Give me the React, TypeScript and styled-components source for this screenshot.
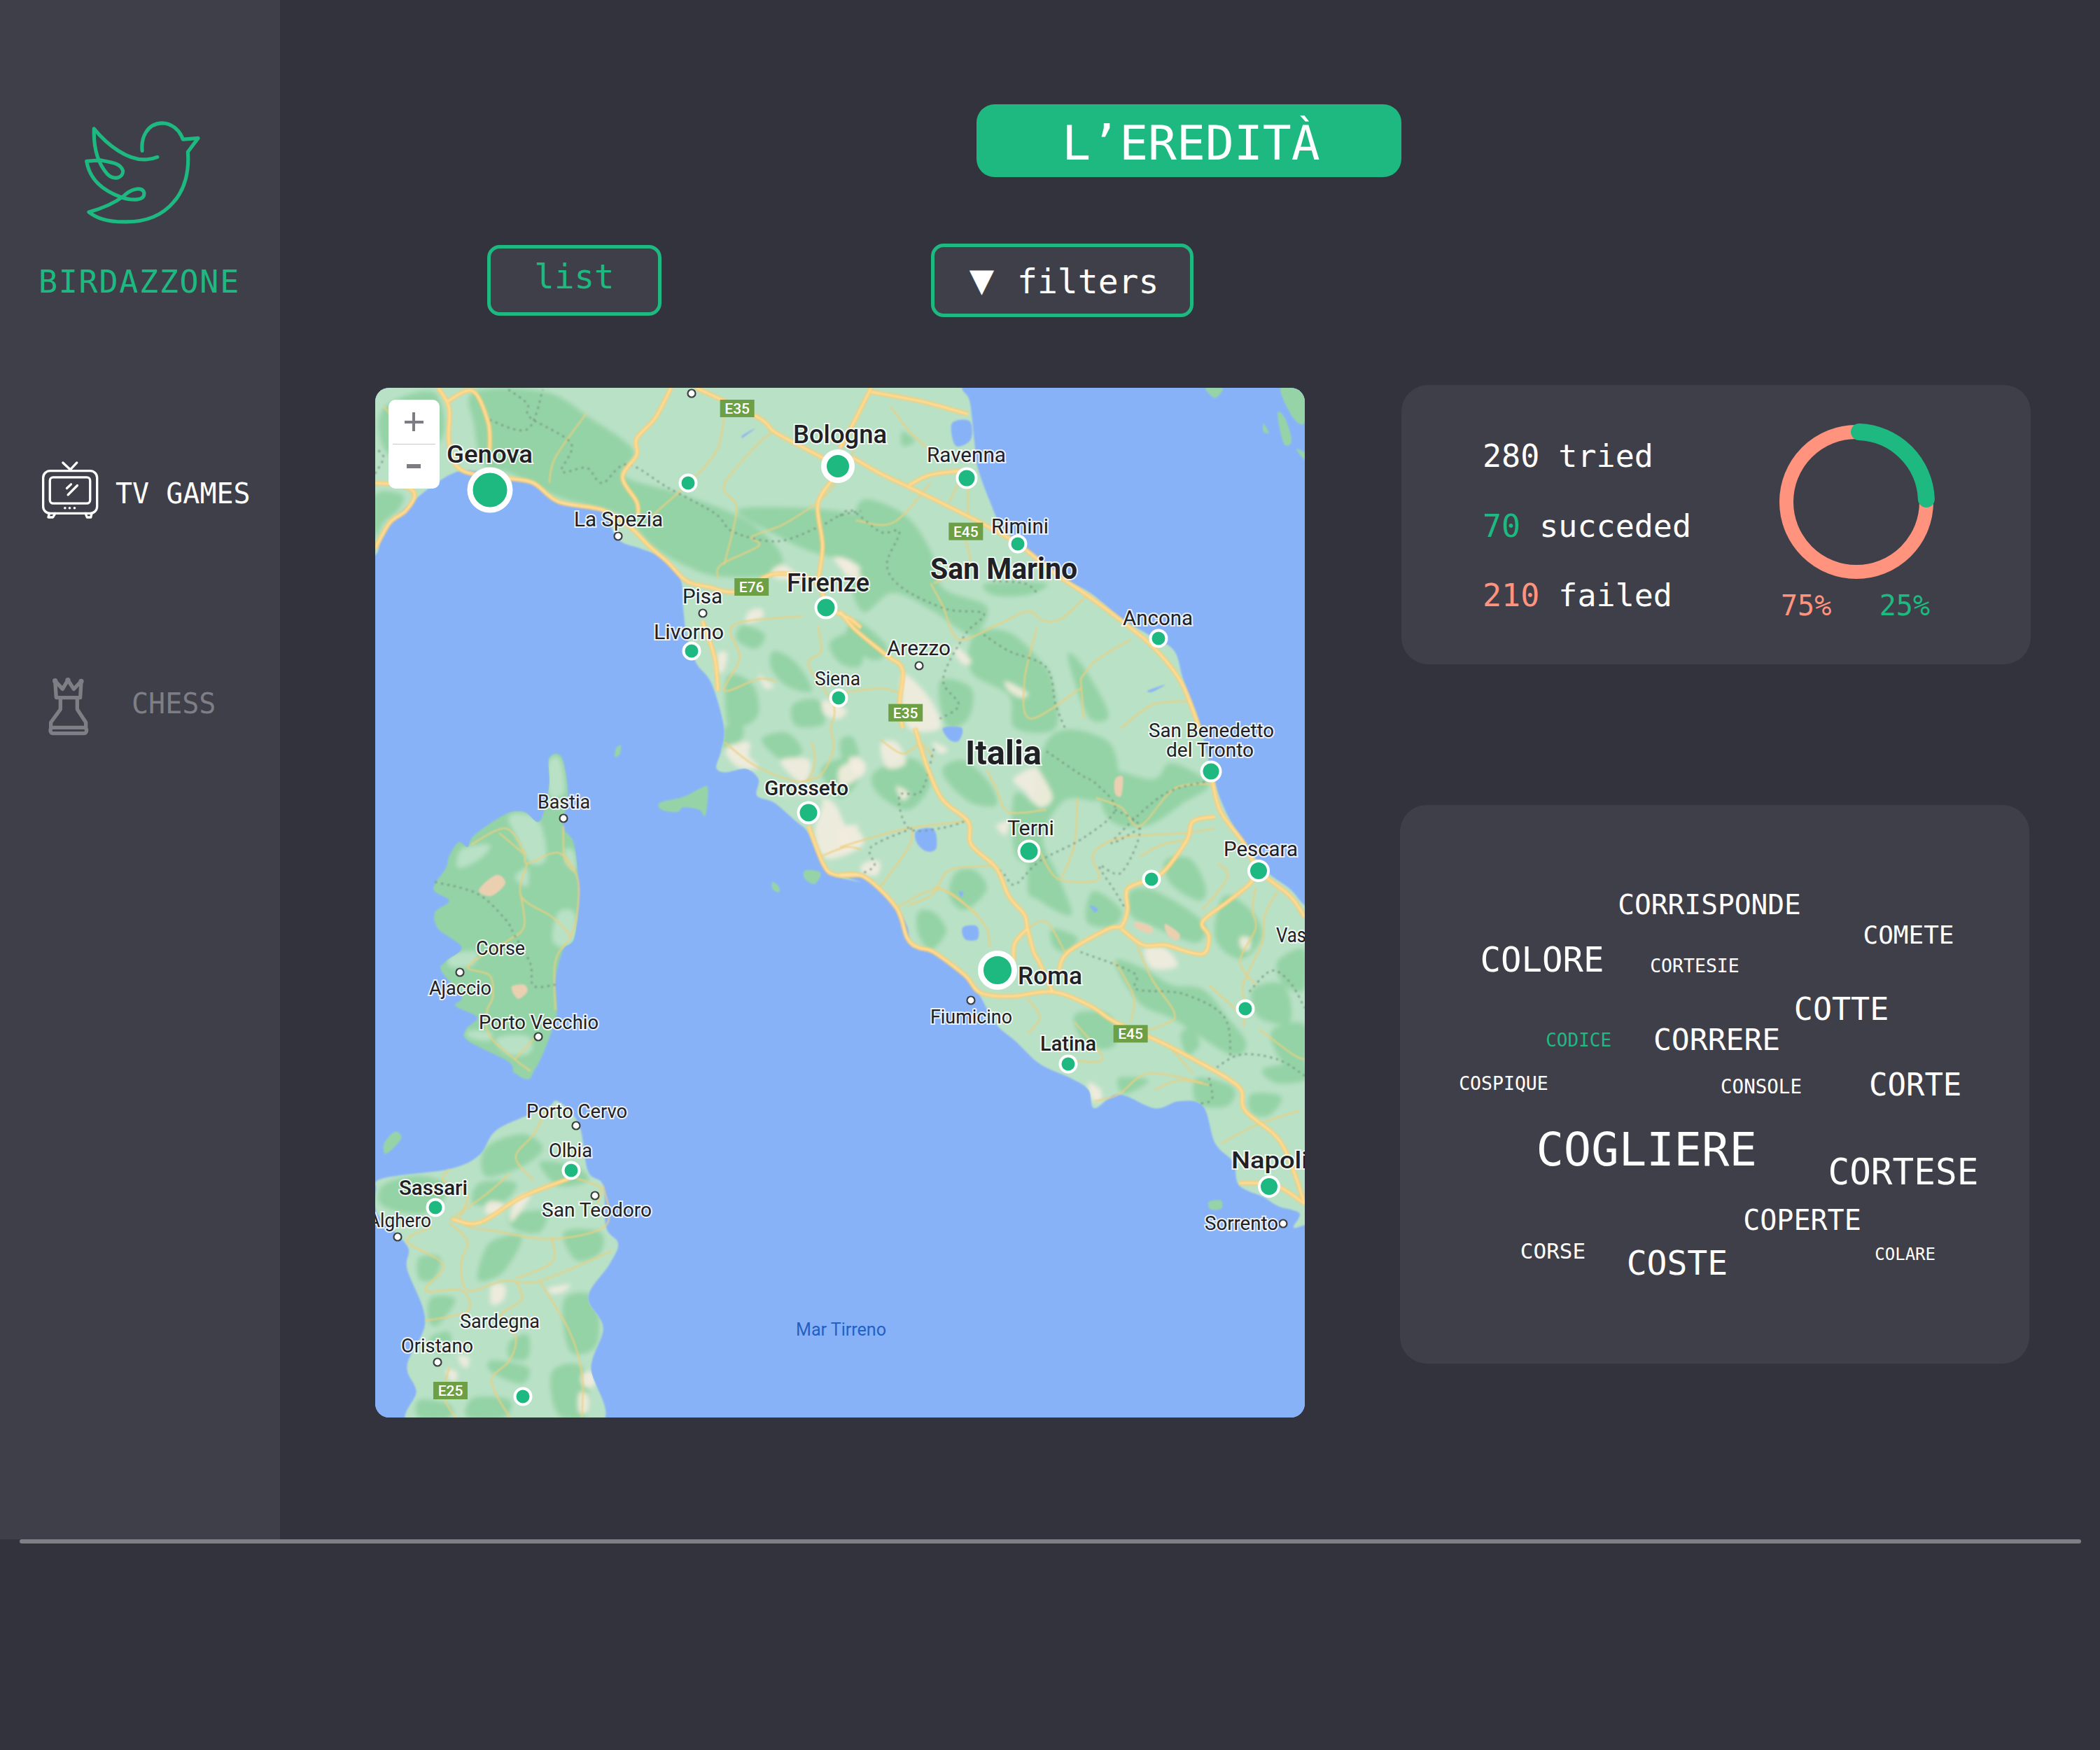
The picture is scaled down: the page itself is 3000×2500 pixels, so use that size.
import React from "react";
import styled, { createGlobalStyle } from "styled-components";

const GREEN = "#1eb980";
const CORAL = "#ff937e";
const BG = "#33333d";
const SURFACE = "#3f3f49";
const MONO = `"DejaVu Sans Mono", "Liberation Mono", monospace`;

const GlobalStyle = createGlobalStyle`
  html, body {
    margin: 0;
    padding: 0;
    background: ${BG};
  }
  body {
    font-family: ${MONO};
    color: #fff;
  }
`;

const Page = styled.div`
  width: 3000px;
  height: 2500px;
  background: ${BG};
`;

const Shell = styled.div`
  display: flex;
  height: 2199px;
`;

const Scrollbar = styled.div`
  width: 2945px;
  height: 6px;
  margin-left: 28px;
  border-radius: 3px;
  background: #7f7f85;
`;

const Sidebar = styled.aside`
  width: 400px;
  flex-shrink: 0;
  box-sizing: border-box;
  padding: 172px 0 0 57px;
  background: ${SURFACE};
`;

const BirdMark = styled.svg`
  display: block;
  width: 168px;
  height: 150px;
  margin-left: 63px;
`;

const Wordmark = styled.div`
  margin: 58px 0 0 -2px;
  font-size: 45px;
  line-height: 1;
  letter-spacing: 1.7px;
  color: ${GREEN};
`;

const NavItem = styled.div<{ $top: number; $gap: number; $indent?: number; $muted?: boolean }>`
  display: flex;
  align-items: center;
  gap: ${(p) => p.$gap}px;
  margin-top: ${(p) => p.$top}px;
  margin-left: ${(p) => p.$indent || 0}px;
  color: ${(p) => (p.$muted ? "#7e7e85" : "#fff")};
`;

const NavLabel = styled.span<{ $drop: number }>`
  font-size: 40px;
  line-height: 1;
  position: relative;
  top: ${(p) => p.$drop}px;
`;

const Main = styled.main`
  flex: 1;
  min-width: 0;
  padding-top: 149px;
`;

const Title = styled.h1`
  box-sizing: border-box;
  width: 607px;
  height: 104px;
  margin: 0 0 0 995px;
  padding: 6px 0 0 6px;
  display: flex;
  align-items: center;
  justify-content: center;
  border-radius: 26px;
  background: ${GREEN};
  font-size: 68px;
  font-weight: 400;
  color: #fff;
`;

const Controls = styled.div`
  display: flex;
  align-items: center;
  gap: 385px;
  margin: 95px 0 0 296px;
`;

const ToggleButton = styled.button`
  box-sizing: border-box;
  height: 101px;
  border: 5px solid ${GREEN};
  border-radius: 18px;
  background: ${SURFACE};
  font-family: ${MONO};
  color: #fff;
`;

const ListButton = styled(ToggleButton)`
  width: 249px;
  padding: 0 0 10px;
  font-size: 47.5px;
  color: ${GREEN};
`;

const FiltersButton = styled(ToggleButton)`
  display: flex;
  align-items: center;
  justify-content: center;
  gap: 33px;
  width: 375px;
  height: 105px;
  padding: 2px 0 0 5px;
  font-size: 48px;
`;

const Caret = styled.span`
  font-family: "DejaVu Sans", sans-serif;
  font-size: 46px;
  line-height: 1;
  position: relative;
  top: -2px;
`;

const Body = styled.div`
  display: flex;
  align-items: flex-start;
  margin: 97px 0 0 136px;
`;

const MapFrame = styled.div`
  position: relative;
  flex-shrink: 0;
  width: 1328px;
  height: 1471px;
  margin-top: 4px;
  border-radius: 20px;
  overflow: hidden;
  background: #88b2f7;
`;

const MapCanvas = styled.svg`
  display: block;
  width: 100%;
  height: 100%;
`;

const MapLabel = styled.text<{ $size: number; $weight: number }>`
  font-family: Roboto, "Liberation Sans", sans-serif;
  font-size: ${(p) => p.$size}px;
  font-weight: ${(p) => p.$weight};
  fill: #1f2125;
  stroke: rgba(255, 255, 255, 0.82);
  stroke-width: 4px;
  paint-order: stroke;
`;

const SeaLabel = styled.text`
  font-family: Roboto, "Liberation Sans", sans-serif;
  font-size: 26px;
  fill: #2360c4;
`;

const ShieldLabel = styled.text`
  font-family: Roboto, "Liberation Sans", sans-serif;
  font-size: 21px;
  font-weight: 500;
  fill: #fff;
  text-anchor: middle;
`;

const ZoomControl = styled.div`
  position: absolute;
  top: 17px;
  left: 19px;
  width: 73px;
  height: 127px;
  border-radius: 10px;
  background: #fff;
`;

const ZoomButton = styled.div<{ $plus?: boolean }>`
  position: relative;
  height: 63px;
  &::before {
    content: "";
    position: absolute;
    left: 26px;
    top: ${(p) => (p.$plus ? 30 : 28)}px;
    width: ${(p) => (p.$plus ? 27 : 20)}px;
    height: ${(p) => (p.$plus ? 4 : 6)}px;
    background: #7c7c84;
    margin-left: ${(p) => (p.$plus ? -3 : 0)}px;
  }
  &::after {
    content: "";
    display: ${(p) => (p.$plus ? "block" : "none")};
    position: absolute;
    left: 34px;
    top: 18px;
    width: 4px;
    height: 27px;
    background: #7c7c84;
  }
`;

const ZoomDivider = styled.div`
  height: 1px;
  margin: 0 6px;
  background: #c8c8cc;
`;

const SideColumn = styled.div`
  display: flex;
  flex-direction: column;
  gap: 201px;
  margin-left: 136px;
`;

const Panel = styled.section`
  box-sizing: border-box;
  width: 899px;
  border-radius: 38px;
  background: ${SURFACE};
`;

const StatsPanel = styled(Panel)`
  display: flex;
  height: 399px;
  margin-left: 2px;
  padding: 57px 0 0 116px;
`;

const StatList = styled.div`
  width: 424px;
  font-size: 45px;
  line-height: 99.5px;
  margin-top: -5px;
`;

const StatRow = styled.div`
  white-space: pre;
`;

const StatCount = styled.span<{ $color: string }>`
  color: ${(p) => p.$color};
`;

const ChartColumn = styled.div`
  width: 220px;
`;

const Donut = styled.svg`
  display: block;
  width: 220px;
  height: 220px;
  overflow: visible;
`;

const Percentages = styled.div`
  display: flex;
  justify-content: space-between;
  width: 213px;
  margin: 14px 0 0 2px;
  font-size: 40px;
  line-height: 1.2;
`;

const Percent = styled.span<{ $color: string }>`
  color: ${(p) => p.$color};
`;

const WordPanel = styled(Panel)`
  position: relative;
  height: 798px;
`;

// word cloud: position is the content, so x / baseline come from the data
const Word = styled.span<{ $x: number; $base: number; $size: number; $hit?: boolean }>`
  position: absolute;
  left: ${(p) => p.$x - 0.07 * p.$size}px;
  top: ${(p) => p.$base - 0.846 * p.$size}px;
  font-size: ${(p) => p.$size}px;
  line-height: 1;
  color: ${(p) => (p.$hit ? GREEN : "#fff")};
`;

const words: [string, number, number, number, boolean?][] = [
  ["CORRISPONDE", 314, 156, 39.5],
  ["COMETE", 664, 198, 36],
  ["COLORE", 118, 238, 49],
  ["CORTESIE", 359, 239, 26.5],
  ["COTTE", 566, 307, 45],
  ["CODICE", 210, 345, 26, true],
  ["CORRERE", 365, 350, 43],
  ["COSPIQUE", 86, 407, 26.5],
  ["CONSOLE", 460, 412, 27.5],
  ["CORTE", 673, 415, 44],
  ["COGLIERE", 199, 515, 65.5],
  ["CORTESE", 615, 542, 51],
  ["COPERTE", 493, 607, 40],
  ["CORSE", 174, 648, 31],
  ["COSTE", 327, 671, 48],
  ["COLARE", 680, 650, 24],
];

/* ---- map drawing. Traced points are in the crop frames I read them from ---- */

type Frame = "a" | "b" | "c" | "d" | "e";
type Shape = [Frame, number[]];

const frames: Record<Frame, [number, number, number, number]> = {
  a: [530, 540, 2.24, 3],
  b: [1200, 540, 2.24, 3],
  c: [530, 1040, 2.24, 3],
  d: [1200, 1040, 2.24, 3],
  e: [530, 1520, 1.161, 3],
};

function toPoints([frame, flat]: Shape): number[][] {
  const [ox, oy, sx, sy] = frames[frame];
  const out: number[][] = [];
  for (let i = 0; i < flat.length; i += 2) {
    out.push([ox + flat[i] / sx, oy + flat[i + 1] / sy]);
  }
  return out;
}

function smooth(points: number[][], closed = false): string {
  const n = points.length;
  const at = (i: number) => (closed ? points[(i + n) % n] : points[Math.max(0, Math.min(n - 1, i))]);
  let d = `M${points[0][0].toFixed(1)} ${points[0][1].toFixed(1)}`;
  const last = closed ? n : n - 1;
  for (let i = 0; i < last; i++) {
    const [p0, p1, p2, p3] = [at(i - 1), at(i), at(i + 1), at(i + 2)];
    const c1x = p1[0] + (p2[0] - p0[0]) / 6;
    const c1y = p1[1] + (p2[1] - p0[1]) / 6;
    const c2x = p2[0] - (p3[0] - p1[0]) / 6;
    const c2y = p2[1] - (p3[1] - p1[1]) / 6;
    d += `C${c1x.toFixed(1)} ${c1y.toFixed(1)} ${c2x.toFixed(1)} ${c2y.toFixed(1)} ${p2[0].toFixed(1)} ${p2[1].toFixed(1)}`;
  }
  return closed ? d + "Z" : d;
}

const path = (s: Shape) => smooth(toPoints(s));
const blob = (s: Shape) => smooth(toPoints(s), true);

const peninsula = smooth(
  [
    [500, 520],
    [1374, 520],
    ...toPoints(["b", [390, 42, 415, 100, 430, 270, 440, 380, 480, 530, 520, 640, 600, 740, 700, 850, 800, 920, 900, 1030, 1000, 1110, 1070, 1170, 1100, 1300, 1150, 1480]]),
    ...toPoints(["d", [1200, 240, 1250, 400, 1300, 500, 1360, 610, 1440, 690, 1487, 760]]),
    [1900, 1320],
    [1900, 1740],
    ...toPoints(["e", [1549, 690, 1530, 700, 1540, 640, 1505, 610, 1480, 570, 1440, 520, 1430, 420, 1400, 340, 1380, 180, 1340, 160, 1300, 190, 1240, 130, 1200, 190, 1190, 110, 1160, 60]]),
    ...toPoints(["d", [640, 1440, 560, 1340, 500, 1270, 440, 1130, 400, 1060, 290, 950, 230, 935, 215, 850, 180, 770, 130, 700, 80, 640, 0, 630]]),
    ...toPoints(["c", [1568, 660, 1480, 630, 1440, 570, 1400, 450, 1360, 400, 1290, 320, 1235, 290, 1240, 220, 1200, 175, 1135, 190, 1105, 170, 1120, 100, 1130, 0]]),
    ...toPoints(["a", [1090, 1310, 1040, 1220, 1010, 1100, 1000, 1000, 990, 860, 930, 770, 860, 730, 790, 690, 740, 560, 680, 555, 590, 520, 520, 450, 440, 425, 340, 400, 280, 400, 220, 440, 150, 510, 100, 570, 60, 620, 30, 700, 13, 760]]),
    [500, 810],
  ],
  true
);

const corsica: Shape = ["c", [570, 130, 610, 125, 630, 280, 615, 420, 650, 500, 665, 720, 650, 900, 615, 950, 590, 1080, 595, 1220, 570, 1330, 520, 1470, 460, 1480, 440, 1430, 310, 1340, 305, 1290, 340, 1240, 270, 1190, 290, 1150, 225, 1040, 240, 1000, 290, 940, 215, 860, 205, 790, 250, 740, 200, 690, 240, 600, 250, 550, 280, 490, 310, 510, 330, 460, 430, 370, 490, 360, 540, 400, 570, 250]];

const sardinia: Shape = ["e", [310, 160, 345, 260, 360, 460, 385, 520, 390, 700, 410, 770, 395, 860, 360, 1000, 385, 1130, 365, 1300, 370, 1560, 78, 1560, 75, 1400, 60, 1290, 90, 1100, 60, 880, 60, 780, 10, 640, 8, 540, 20, 490, 130, 450, 180, 390, 210, 280, 290, 190]];

const islets: Shape[] = [
  ["c", [925, 320, 1000, 295, 1060, 255, 1078, 260, 1070, 375, 1050, 350, 1000, 340, 980, 360, 930, 350]],
  ["c", [785, 85, 800, 75, 795, 115, 780, 122]],
  ["c", [1390, 610, 1438, 620, 1420, 668, 1388, 645]],
  ["c", [1285, 660, 1305, 680, 1305, 705, 1285, 690]],
  ["e", [240, 0, 270, 0, 262, 65, 240, 40]],
  ["e", [40, 290, 50, 320, 25, 385, 22, 340]],
  ["e", [1390, 590, 1410, 585, 1410, 620, 1392, 622]],
  ["b", [1170, 42, 1225, 42, 1200, 85]],
  ["b", [1410, 42, 1487, 42, 1487, 190, 1450, 170]],
  ["b", [1400, 150, 1425, 175, 1445, 270, 1420, 280]],
  ["b", [1355, 195, 1372, 235, 1355, 230]],
  ["b", [1460, 305, 1487, 320, 1487, 350]],
];

const forests: Shape[] = [
  ["a", [330, 60, 560, 60, 700, 170, 840, 310, 810, 420, 1000, 500, 1200, 610, 1310, 750, 1290, 840, 1110, 850, 1000, 800, 900, 720, 800, 590, 600, 510, 450, 410, 360, 370, 330, 200]],
  ["a", [13, 500, 100, 500, 90, 560, 40, 620, 13, 680]],
  ["a", [40, 130, 200, 60, 230, 250, 120, 340, 40, 300]],
  ["a", [1180, 560, 1568, 590, 1568, 770, 1450, 760, 1320, 690]],
  ["a", [1190, 1060, 1260, 1100, 1230, 1160, 1170, 1120]],
  ["a", [1290, 1170, 1360, 1220, 1410, 1340, 1330, 1320, 1280, 1240]],
  ["a", [1140, 1280, 1220, 1310, 1240, 1440, 1180, 1500, 1140, 1480]],
  ["a", [1350, 1400, 1430, 1380, 1450, 1480, 1360, 1490]],
  ["a", [1470, 1130, 1568, 1090, 1568, 1230, 1500, 1220]],
  ["b", [80, 520, 210, 590, 290, 740, 330, 900, 470, 980, 420, 1100, 300, 1000, 170, 920, 70, 1000, 20, 780, 40, 620]],
  ["b", [470, 880, 660, 880, 600, 930, 490, 930]],
  ["b", [430, 1100, 540, 1090, 640, 1210, 680, 1300, 690, 1500, 560, 1500, 540, 1360, 420, 1260]],
  ["b", [730, 1180, 780, 1240, 860, 1440, 800, 1460, 750, 1300]],
  ["b", [50, 1040, 150, 1150, 110, 1210, 20, 1130]],
  ["b", [320, 1300, 420, 1330, 410, 1460, 340, 1490]],
  ["b", [200, 230, 240, 270, 200, 290]],
  ["d", [110, 190, 230, 130, 290, 230, 220, 350, 120, 280]],
  ["d", [0, 60, 40, 40, 60, 130, 20, 190]],
  ["d", [330, 170, 400, 140, 480, 240, 500, 330, 420, 320, 350, 240]],
  ["d", [560, 280, 640, 380, 630, 560, 560, 540]],
  ["d", [660, 60, 850, 50, 890, 230, 830, 310, 720, 310, 650, 470, 700, 640, 740, 800, 640, 740, 600, 640]],
  ["d", [830, 180, 1000, 220, 1060, 150, 1180, 240, 1100, 320, 980, 420, 860, 390]],
  ["d", [370, 620, 430, 610, 470, 690, 400, 780, 350, 720]],
  ["d", [250, 790, 300, 790, 340, 870, 290, 950, 250, 880]],
  ["d", [680, 860, 760, 900, 720, 960, 680, 930]],
  ["d", [810, 700, 900, 780, 870, 850, 790, 830]],
  ["d", [930, 700, 1010, 700, 1160, 830, 1140, 920, 1000, 850, 930, 800]],
  ["d", [1040, 570, 1120, 560, 1170, 680, 1150, 740, 1060, 670]],
  ["d", [880, 1000, 970, 1030, 1060, 1100, 1160, 1120, 1240, 1240, 1300, 1350, 1250, 1400, 1070, 1250, 960, 1180]],
  ["d", [750, 1230, 860, 1230, 880, 1360, 790, 1360]],
  ["d", [1230, 720, 1320, 790, 1350, 900, 1280, 990, 1200, 900]],
  ["d", [1400, 1000, 1487, 950, 1487, 1120, 1420, 1100]],
  ["d", [1320, 1120, 1420, 1100, 1440, 1260, 1340, 1240]],
  ["d", [1380, 1300, 1487, 1270, 1487, 1440, 1420, 1440]],
  ["d", [1090, 1310, 1130, 1290, 1150, 1360, 1110, 1400]],
  ["c", [1250, 50, 1330, 20, 1380, 100, 1320, 140]],
  ["c", [1440, 180, 1520, 130, 1568, 200, 1500, 300]],
  ["c", [1130, 0, 1190, 0, 1180, 60, 1130, 100]],
  ["e", [190, 360, 250, 300, 285, 360, 250, 440, 190, 480]],
  ["e", [20, 520, 80, 480, 130, 530, 90, 640, 20, 610]],
  ["e", [180, 510, 240, 510, 220, 590, 170, 600]],
  ["e", [280, 420, 340, 440, 360, 500, 310, 520]],
  ["e", [230, 650, 290, 630, 280, 720, 240, 710]],
  ["e", [320, 720, 380, 720, 380, 810, 340, 840]],
  ["e", [200, 760, 250, 740, 220, 890, 180, 930, 180, 860]],
  ["e", [80, 830, 115, 830, 105, 920, 80, 920]],
  ["e", [100, 1000, 140, 1010, 110, 1120, 95, 1090]],
  ["e", [320, 1010, 370, 1000, 375, 1200, 330, 1230]],
  ["e", [230, 1190, 260, 1160, 260, 1260, 230, 1260]],
  ["e", [100, 1170, 130, 1150, 130, 1240, 100, 1220]],
  ["e", [200, 1270, 260, 1300, 250, 1370, 200, 1320]],
  ["e", [300, 1320, 350, 1300, 360, 1500, 310, 1500]],
  ["e", [80, 1440, 130, 1460, 130, 1515, 80, 1515]],
  ["e", [170, 1430, 230, 1440, 220, 1515, 160, 1515]],
  ["e", [1370, 60, 1430, 100, 1420, 180, 1370, 170]],
  ["e", [1240, 60, 1290, 70, 1250, 130]],
  ["e", [1460, 130, 1510, 140, 1490, 220, 1460, 210]],
  ["e", [1480, 20, 1549, 0, 1549, 70, 1500, 80]],
];

// lighter strips over the dark Corsican base
const corsicaLights: Shape[] = [
  ["c", [440, 380, 500, 370, 545, 420, 560, 560, 510, 580, 470, 480]],
  ["c", [570, 140, 605, 135, 620, 270, 580, 300, 565, 240]],
  ["c", [600, 790, 650, 790, 655, 900, 610, 940, 580, 900]],
  ["c", [290, 520, 380, 500, 350, 560, 280, 600]],
  ["c", [500, 600, 500, 680, 460, 640]],
  ["c", [620, 520, 650, 530, 655, 610, 625, 580]],
  ["c", [260, 970, 340, 960, 320, 1020, 250, 1020]],
  ["c", [400, 1330, 500, 1320, 510, 1390, 440, 1400]],
  ["c", [310, 1300, 380, 1300, 380, 1340, 320, 1330]],
];

const plains: Shape[] = [
  ["a", [1280, 830, 1320, 800, 1370, 860, 1300, 860]],
  ["a", [1210, 1000, 1250, 990, 1250, 1030, 1200, 1050]],
  ["a", [1240, 1270, 1260, 1290, 1290, 1320, 1260, 1330]],
  ["a", [1480, 770, 1530, 780, 1568, 820, 1520, 830]],
  ["a", [1450, 1380, 1520, 1420, 1500, 1460, 1450, 1440]],
  ["a", [1110, 1180, 1140, 1180, 1130, 1250, 1110, 1260]],
  ["b", [0, 770, 40, 800, 70, 860, 20, 850]],
  ["b", [210, 1270, 290, 1380, 320, 1500, 220, 1500, 195, 1340]],
  ["b", [370, 1150, 420, 1210, 400, 1230, 370, 1190]],
  ["b", [530, 1300, 600, 1350, 580, 1370, 540, 1340]],
  ["d", [130, 70, 180, 60, 210, 150, 150, 170]],
  ["d", [0, 440, 20, 450, 40, 530, 0, 510]],
  ["d", [20, 420, 60, 420, 40, 460]],
  ["d", [0, 170, 70, 140, 80, 190, 30, 240, 0, 250]],
  ["d", [75, 580, 125, 570, 120, 630, 70, 620]],
  ["d", [295, 60, 345, 90, 320, 110]],
  ["d", [555, 220, 620, 170, 650, 210, 680, 300, 640, 340, 590, 270]],
  ["d", [500, 420, 540, 400, 530, 460]],
  ["d", [180, 250, 220, 280, 200, 310]],
  ["d", [975, 950, 1040, 945, 1080, 1020, 1000, 1030]],
  ["d", [1280, 900, 1310, 900, 1310, 950, 1285, 945]],
  ["c", [1140, 80, 1210, 60, 1210, 120, 1240, 170, 1180, 170, 1140, 120]],
  ["c", [1310, 140, 1400, 135, 1400, 210, 1370, 230]],
  ["c", [1290, 300, 1440, 290, 1420, 450, 1460, 560, 1568, 510, 1568, 450, 1520, 420, 1480, 320, 1400, 290]],
  ["c", [1530, 130, 1568, 130, 1568, 200, 1540, 180]],
  ["e", [195, 590, 220, 600, 210, 640, 190, 640]],
  ["e", [240, 580, 265, 560, 240, 660, 230, 670]],
  ["e", [200, 950, 222, 950, 220, 1010, 200, 1030]],
  ["e", [295, 960, 330, 945, 320, 975, 300, 985]],
  ["e", [145, 1250, 162, 1260, 160, 1300, 150, 1290]],
  ["e", [125, 1310, 142, 1320, 140, 1360, 130, 1350]],
  ["e", [350, 1330, 372, 1320, 370, 1380, 352, 1380]],
  ["e", [345, 1410, 360, 1420, 360, 1490, 345, 1490]],
  ["e", [1190, 80, 1210, 110, 1210, 160, 1195, 150]],
];

// bare high ground, the tan patches
const peaks: Shape[] = [
  ["c", [345, 695, 400, 630, 430, 665, 385, 720]],
  ["c", [450, 1110, 490, 1100, 500, 1130, 470, 1160]],
  ["d", [945, 830, 995, 850, 995, 880, 950, 860]],
  ["d", [1040, 840, 1085, 880, 1080, 910, 1050, 890]],
  ["d", [880, 220, 905, 210, 900, 290, 880, 280]],
];

const waters: Shape[] = [
  ["b", [358, 195, 415, 185, 418, 265, 370, 290]],
  ["d", [245, 440, 300, 435, 308, 515, 275, 528, 245, 490]],
  ["d", [393, 855, 438, 850, 440, 905, 400, 905]],
  ["d", [330, 0, 390, 0, 380, 55, 350, 50]],
  ["d", [380, 700, 395, 705, 388, 725]],
  ["d", [800, 760, 825, 775, 815, 790]],
  ["b", [985, 1340, 1040, 1315, 1000, 1345]],
  ["a", [1190, 245, 1230, 215, 1190, 255]],
];

const majorRoads: Shape[] = [
  ["a", [13, 450, 100, 460, 140, 500, 110, 570, 60, 620, 13, 730]],
  ["a", [215, 42, 250, 130, 250, 280, 290, 395, 440, 430, 520, 450, 600, 530, 740, 565, 830, 640, 890, 720, 950, 790, 1010, 870, 1080, 895, 1170, 915, 1290, 840, 1420, 870, 1456, 984]],
  ["a", [245, 100, 325, 55, 375, 190, 380, 310]],
  ["a", [960, 42, 910, 170, 850, 260, 850, 330, 805, 425, 850, 530, 855, 590]],
  ["a", [1040, 42, 1240, 170, 1290, 230, 1400, 310, 1495, 378]],
  ["b", [40, 340, 130, 410, 240, 480, 450, 620, 570, 712, 690, 840, 790, 930, 900, 1040, 1000, 1150, 1090, 1300, 1150, 1500]],
  ["d", [1187, 185, 1215, 350, 1290, 490, 1340, 610, 1440, 720, 1487, 810]],
  ["a", [1480, 430, 1430, 540, 1445, 720, 1430, 870]],
  ["a", [1456, 984, 1530, 1030, 1568, 1070]],
  ["b", [0, 1000, 50, 1080, 150, 1190, 200, 1250, 190, 1400, 200, 1500]],
  ["d", [240, 0, 280, 170, 330, 310, 410, 400, 420, 500, 500, 600, 540, 720, 590, 800, 600, 860, 620, 960, 640, 1010, 680, 1130]],
  ["b", [220, 460, 290, 415, 406, 395]],
  ["b", [100, 60, 260, 100, 410, 155]],
  ["b", [100, 42, 40, 200, 0, 300]],
  ["d", [0, 628, 80, 640, 180, 770, 215, 900, 250, 940, 300, 960, 400, 1060, 450, 1135, 550, 1150, 680, 1130, 800, 1190, 880, 1260, 1040, 1355, 1240, 1500]],
  ["d", [700, 1040, 730, 960, 860, 860, 900, 850, 920, 780, 920, 690, 990, 650, 1040, 610, 1110, 480, 1130, 400, 1200, 380]],
  ["d", [900, 860, 970, 930, 1040, 930, 1130, 965, 1170, 960, 1180, 890, 1160, 830, 1240, 745, 1310, 670, 1340, 610]],
  ["d", [555, 1000, 560, 920, 600, 860]],
  ["a", [1060, 1040, 1100, 1200, 1110, 1340]],
  ["c", [1400, 420, 1450, 590, 1490, 630, 1568, 630]],
  ["e", [135, 665, 180, 680, 250, 570, 330, 490]],
  ["e", [1380, 0, 1440, 100, 1450, 200, 1510, 340, 1549, 600]],
  ["e", [1440, 510, 1500, 520, 1549, 600]],
];

const minorRoads: Shape[] = [
  ["a", [1290, 230, 1240, 280, 1130, 460, 1170, 560, 1130, 800]],
  ["a", [1560, 270, 1470, 480, 1330, 620, 1220, 680, 1240, 720, 1120, 800, 1110, 860]],
  ["a", [1380, 1020, 1160, 1060, 1180, 1200, 1130, 1340, 1240, 1290, 1300, 1300]],
  ["a", [1430, 1060, 1440, 1170, 1400, 1230, 1480, 1400, 1470, 1500]],
  ["a", [570, 450, 590, 340, 690, 150]],
  ["a", [900, 590, 1040, 420, 1110, 300, 1130, 160]],
  ["a", [40, 120, 110, 260, 130, 500]],
  ["b", [160, 120, 230, 240, 290, 310]],
  ["b", [50, 610, 170, 620, 290, 450]],
  ["b", [350, 530, 380, 450]],
  ["b", [410, 470, 410, 600]],
  ["b", [290, 880, 330, 980, 380, 1120, 500, 1060, 600, 1000, 650, 1040, 710, 1030, 790, 930]],
  ["b", [770, 1290, 820, 1210, 930, 1120]],
  ["b", [770, 1290, 780, 1460]],
  ["b", [900, 1500, 1000, 1400, 1110, 1385]],
  ["b", [630, 1070, 590, 1300, 610, 1460, 770, 1330]],
  ["b", [0, 1350, 130, 1330, 190, 1350]],
  ["b", [400, 690, 410, 800, 300, 880]],
  ["c", [320, 500, 430, 430, 490, 530, 500, 580, 600, 535, 660, 640, 660, 790, 640, 890, 590, 1000, 590, 1210]],
  ["c", [410, 450, 490, 540]],
  ["c", [500, 580, 480, 720, 580, 810, 640, 890]],
  ["c", [480, 720, 490, 850, 440, 910, 310, 1020, 380, 1060, 390, 1150, 370, 1220, 380, 1320, 460, 1420, 510, 1470]],
  ["c", [615, 420, 620, 560, 655, 620]],
  ["c", [530, 1320, 460, 1420]],
  ["c", [1130, 60, 1240, 170, 1380, 230, 1420, 150, 1410, 60]],
  ["c", [1470, 0, 1480, 90, 1440, 200, 1380, 230]],
  ["c", [1440, 550, 1520, 510, 1568, 520]],
  ["d", [130, 50, 200, 110, 260, 70, 300, 130]],
  ["d", [0, 510, 100, 470, 220, 430, 400, 400]],
  ["d", [130, 680, 220, 510, 230, 440]],
  ["d", [220, 760, 300, 710, 350, 610, 490, 590]],
  ["d", [300, 680, 340, 700, 420, 780, 470, 860, 480, 940]],
  ["d", [600, 860, 660, 830, 720, 960]],
  ["d", [470, 180, 500, 260, 540, 360, 660, 350]],
  ["d", [640, 530, 690, 640, 780, 660, 830, 640, 810, 540, 900, 470, 1100, 450, 1200, 430]],
  ["d", [820, 300, 900, 340, 960, 420, 1070, 260, 1190, 240]],
  ["d", [960, 550, 1030, 500, 1110, 480]],
  ["d", [760, 300, 750, 500, 710, 640]],
  ["d", [1210, 580, 1240, 640, 1160, 780]],
  ["d", [1330, 680, 1320, 780, 1330, 860, 1280, 1000, 1330, 1100]],
  ["d", [1400, 700, 1360, 800, 1350, 920, 1290, 1100, 1300, 1200, 1290, 1280]],
  ["d", [950, 930, 1000, 1080, 1070, 1220, 1040, 1270, 920, 1310, 880, 1260]],
  ["d", [880, 1000, 940, 1150, 930, 1260]],
  ["d", [1340, 1290, 1450, 1400, 1487, 1420]],
  ["d", [1050, 1360, 1130, 1480]],
  ["d", [750, 1260, 840, 1420, 720, 1420]],
  ["d", [1180, 1100, 1270, 1210]],
  ["d", [600, 1160, 640, 1240, 600, 1310]],
  ["d", [180, 770, 320, 690, 440, 800]],
  ["e", [130, 450, 120, 500, 160, 560, 150, 680, 215, 720, 300, 750, 390, 690, 385, 520]],
  ["e", [230, 470, 190, 560, 130, 670]],
  ["e", [340, 490, 380, 530, 375, 600]],
  ["e", [290, 200, 270, 300, 240, 400, 270, 500]],
  ["e", [130, 680, 160, 760, 150, 850, 160, 970, 220, 930, 280, 930, 400, 800]],
  ["e", [100, 700, 60, 760, 120, 860, 90, 970, 150, 970, 160, 1060, 90, 1100]],
  ["e", [300, 740, 300, 850, 240, 920]],
  ["e", [240, 930, 250, 1010, 215, 1080, 240, 1170, 230, 1270, 200, 1360, 230, 1515]],
  ["e", [280, 930, 330, 1150, 350, 1330, 350, 1515]],
  ["e", [130, 1300, 120, 1420, 140, 1515]],
  ["e", [1200, 160, 1240, 130, 1290, 40, 1380, 80]],
  ["e", [1410, 340, 1470, 260, 1540, 200]],
  ["e", [1390, 90, 1340, 70, 1300, 110]],
];

const borders: Shape[] = [
  ["a", [440, 50, 500, 110, 510, 170, 640, 280, 610, 400, 690, 385, 740, 450, 820, 370, 950, 470, 1100, 580, 1160, 660, 1300, 700, 1430, 640, 1500, 590, 1568, 570]],
  ["a", [380, 180, 500, 220, 550, 50]],
  ["a", [13, 410, 40, 340, 13, 300]],
  ["b", [0, 590, 40, 570, 130, 660, 190, 660, 150, 800, 200, 900, 340, 990, 460, 1010, 400, 1100, 330, 1290, 380, 1400, 320, 1460]],
  ["b", [460, 1100, 540, 1170, 660, 1240, 690, 1400, 720, 1500]],
  ["b", [490, 870, 590, 880, 630, 920]],
  ["d", [300, 90, 260, 270, 190, 290, 220, 430, 320, 430, 400, 400]],
  ["d", [230, 430, 100, 510, 110, 590, 60, 630]],
  ["d", [420, 500, 520, 620, 560, 670, 640, 570, 780, 470, 880, 350, 820, 240, 770, 200, 650, 90]],
  ["d", [880, 350, 960, 430, 900, 620, 830, 590, 880, 700, 920, 790]],
  ["d", [960, 430, 870, 490, 1030, 290, 1170, 230]],
  ["d", [770, 960, 940, 1050, 950, 1120, 1100, 1140, 1230, 1240, 1250, 1420]],
  ["d", [1310, 1130, 1380, 1040, 1440, 1090, 1487, 1200]],
  ["d", [1190, 1470, 1280, 1400, 1400, 1420, 1487, 1490]],
  ["c", [205, 660, 340, 710, 430, 820, 460, 890, 510, 1010, 520, 1105, 590, 1100]],
  ["e", [1390, 60, 1395, 150, 1375, 170]],
];

const shields: [string, Frame, number, number][] = [
  ["E35", "a", 1117, 93],
  ["E76", "a", 1163, 858],
  ["E45", "b", 348, 620],
  ["E35", "b", 155, 1397],
  ["E45", "d", 875, 1273],
];

// text, x, baseline, width, size, weight
const labels: [string, number, number, number, number, number][] = [
  ["Genova", 638, 661, 123, 35, 500],
  ["Bologna", 1133, 633, 134, 36, 500],
  ["La Spezia", 820, 752, 127, 30, 400],
  ["Ravenna", 1324, 660, 113, 29, 400],
  ["Rimini", 1416, 762, 82, 29, 400],
  ["San Marino", 1329, 827, 210, 42, 700],
  ["Ancona", 1604, 893, 100, 29, 400],
  ["Arezzo", 1267, 936, 91, 29, 400],
  ["Pisa", 975, 862, 57, 29, 400],
  ["Firenze", 1124, 845, 118, 36, 500],
  ["Livorno", 934, 913, 100, 29, 400],
  ["Siena", 1164, 979, 65, 27, 400],
  ["Italia", 1379, 1092, 109, 49, 700],
  ["San Benedetto", 1641, 1053, 179, 27, 400],
  ["del Tronto", 1666, 1081, 125, 27, 400],
  ["Terni", 1439, 1193, 67, 29, 400],
  ["Pescara", 1748, 1223, 106, 29, 400],
  ["Vasto", 1823, 1346, 66, 29, 400],
  ["Roma", 1454, 1406, 92, 35, 500],
  ["Fiumicino", 1329, 1462, 117, 28, 400],
  ["Latina", 1486, 1501, 80, 29, 500],
  ["Grosseto", 1092, 1136, 120, 29, 500],
  ["Bastia", 768, 1155, 75, 27, 400],
  ["Corse", 680, 1364, 70, 27, 400],
  ["Ajaccio", 613, 1421, 89, 27, 400],
  ["Porto Vecchio", 684, 1470, 171, 27, 400],
  ["Porto Cervo", 752, 1597, 144, 27, 400],
  ["Olbia", 784, 1653, 62, 27, 400],
  ["Sassari", 570, 1707, 98, 29, 500],
  ["San Teodoro", 774, 1738, 157, 27, 400],
  ["Alghero", 526, 1753, 90, 27, 400],
  ["Sardegna", 657, 1897, 114, 27, 400],
  ["Oristano", 573, 1932, 103, 27, 400],
  ["Napoli", 1759, 1669, 110, 34, 500],
  ["Sorrento", 1721, 1757, 105, 27, 400],
];

const towns = [
  [988, 562], [883, 766], [1004, 876], [1313, 951], [805, 1169], [657, 1389], [769, 1481],
  [1387, 1429], [823, 1608], [850, 1708], [568, 1767], [625, 1946], [1833, 1748],
];

// cx, cy, outer radius
const markers = [
  [700, 700, 32.5], [1197, 666, 24], [983, 690, 13.5], [1180, 868, 16.5], [988, 930, 13.5],
  [1198, 997, 13.5], [1381, 683, 15.5], [1454, 777, 13.5], [1655, 912, 13.5], [1155, 1161, 16.5],
  [1730, 1102, 15.5], [1470, 1216, 16.5], [1798, 1244, 16], [1645, 1256, 13.5], [1425, 1386, 28],
  [1779, 1441, 13.5], [1526, 1520, 13.5], [816, 1672, 13.5], [622, 1725, 13.5], [1813, 1695, 16],
  [747, 1995, 13.5],
];

function ItalyMap() {
  return (
    <MapFrame>
      <MapCanvas viewBox="536 554 1328 1471">
        <defs>
          <filter id="soft" x="-5%" y="-5%" width="110%" height="110%">
            <feGaussianBlur stdDeviation="0.9" />
          </filter>
          <filter id="softer" x="-5%" y="-5%" width="110%" height="110%">
            <feGaussianBlur stdDeviation="3.2" />
          </filter>
          <clipPath id="mainland">
            <path d={peninsula} />
            <path d={blob(sardinia)} />
          </clipPath>
          <clipPath id="corsica">
            <path d={blob(corsica)} />
          </clipPath>
        </defs>
        <rect x="536" y="554" width="1328" height="1471" fill="#88b2f7" />
        <g filter="url(#soft)">
          <path d={peninsula} fill="#b9e1c6" />
          <path d={blob(sardinia)} fill="#b9e1c6" />
          <path d={blob(corsica)} fill="#94d3a6" />
          {islets.map((s, i) => (
            <path key={i} d={blob(s)} fill="#96d4a8" />
          ))}
        </g>
        <g clipPath="url(#mainland)">
          <g filter="url(#softer)">
            {forests.map((s, i) => (
              <path key={i} d={blob(s)} fill="#94d3a6" />
            ))}
            {plains.map((s, i) => (
              <path key={i} d={blob(s)} fill="#f3ecdf" fillOpacity="0.9" />
            ))}
          </g>
        </g>
        <g clipPath="url(#corsica)">
          <g filter="url(#softer)">
            {corsicaLights.map((s, i) => (
              <path key={i} d={blob(s)} fill="#b9e1c6" />
            ))}
          </g>
        </g>
        <g filter="url(#soft)">
          {peaks.map((s, i) => (
            <path key={i} d={blob(s)} fill="#ebcfb1" />
          ))}
          {waters.map((s, i) => (
            <path key={i} d={blob(s)} fill="#88b2f7" />
          ))}
          {minorRoads.map((s, i) => (
            <path key={i} d={path(s)} fill="none" stroke="#eccf7f" strokeWidth="2" />
          ))}
          {borders.map((s, i) => (
            <path key={i} d={path(s)} fill="none" stroke="#75927f" strokeWidth="2.4" strokeDasharray="3 6" />
          ))}
          {majorRoads.map((s, i) => (
            <path key={i} d={path(s)} fill="none" stroke="#f9cd74" strokeWidth="6.5" strokeLinejoin="round" />
          ))}
          {majorRoads.map((s, i) => (
            <path key={i} d={path(s)} fill="none" stroke="#fce3a8" strokeWidth="2" strokeLinejoin="round" />
          ))}
        </g>
        {shields.map(([text, frame, fx, fy], i) => {
          const [[x, y]] = toPoints([frame, [fx, fy]]);
          return (
            <g key={i}>
              <rect x={x} y={y} width="49" height="25" fill="#6d9f45" />
              <ShieldLabel x={x + 24.5} y={y + 20}>{text}</ShieldLabel>
            </g>
          );
        })}
        <rect x="619" y="1974" width="49" height="25" fill="#6d9f45" />
        <ShieldLabel x="643.5" y="1994">E25</ShieldLabel>
        {towns.map(([x, y], i) => (
          <circle key={i} cx={x} cy={y} r="5.5" fill="#fff" stroke="#3c4043" strokeWidth="2.2" />
        ))}
        {labels.map(([text, x, y, w, size, weight]) => (
          <MapLabel key={text} x={x} y={y} $size={size} $weight={weight} textLength={w} lengthAdjust="spacingAndGlyphs">
            {text}
          </MapLabel>
        ))}
        <SeaLabel x="1137" y="1908" textLength="129" lengthAdjust="spacingAndGlyphs">Mar Tirreno</SeaLabel>
        {markers.map(([x, y, r], i) => (
          <circle key={i} cx={x} cy={y} r={r - (r > 20 ? 4 : 2)} fill={GREEN} stroke="#fff" strokeWidth={r > 20 ? 8 : 4} />
        ))}
      </MapCanvas>
      <ZoomControl>
        <ZoomButton $plus />
        <ZoomDivider />
        <ZoomButton />
      </ZoomControl>
    </MapFrame>
  );
}

export default function App() {
  return (
    <Page>
      <GlobalStyle />
      <Shell>
        <Sidebar>
          <BirdMark viewBox="360 215 505 450" fill="none" stroke={GREEN} strokeWidth="15.5" strokeLinecap="round" strokeLinejoin="round">
            <path d="M610 345C604 290 630 228 695 226C735 226 770 255 785 296L850 291L806 350C812 430 795 510 745 565C690 630 610 652 530 650C470 650 420 640 381 608C430 595 490 570 530 540C560 510 610 495 618 525C622 560 570 560 520 545C440 515 385 470 371 390L430 385C470 395 515 395 527 430C530 460 490 475 460 445C425 405 400 340 403 250C460 320 550 390 630 382C650 381 665 376 675 372" />
          </BirdMark>
          <Wordmark>BIRDAZZONE</Wordmark>
          <NavItem $top={231} $gap={21}>
            <svg width="87" height="88" viewBox="170 105 260 265" fill="none" stroke="#fff" strokeLinecap="round" strokeLinejoin="round">
              <rect x="183" y="155" width="232" height="183" rx="30" strokeWidth="10" />
              <rect x="212" y="183" width="173" height="112" rx="14" strokeWidth="10" />
              <path d="M268 120L300 150L328 120M285 230L303 213M290 258L330 218M210 338L205 355H225L235 338M365 338L372 355H388L392 338" strokeWidth="10" />
              <circle cx="277" cy="315" r="3" strokeWidth="5" />
              <circle cx="297" cy="315" r="3" strokeWidth="5" />
              <circle cx="318" cy="315" r="3" strokeWidth="5" />
            </svg>
            <NavLabel $drop={5}>TV GAMES</NavLabel>
          </NavItem>
          <NavItem $top={222} $gap={61} $indent={10} $muted>
            <svg width="60" height="85" viewBox="205 1030 180 255" fill="none" stroke="#7e7e85" strokeWidth="16" strokeLinecap="round" strokeLinejoin="round">
              <path d="M240 1050L245 1122H348L352 1052L320 1085L295 1047L272 1085Z" />
              <path d="M263 1125V1172L222 1228V1250M335 1125V1172L372 1228V1250" />
              <rect x="220" y="1250" width="155" height="25" rx="12" />
              <circle cx="240" cy="1050" r="3" />
              <circle cx="295" cy="1047" r="3" />
              <circle cx="352" cy="1052" r="3" />
            </svg>
            <NavLabel $drop={-4}>CHESS</NavLabel>
          </NavItem>
        </Sidebar>
        <Main>
          <Title>L’EREDITÀ</Title>
          <Controls>
            <ListButton>list</ListButton>
            <FiltersButton>
              <Caret>▼</Caret>
              filters
            </FiltersButton>
          </Controls>
          <Body>
            <ItalyMap />
            <SideColumn>
              <StatsPanel>
                <StatList>
                  <StatRow>280 tried</StatRow>
                  <StatRow><StatCount $color={GREEN}>70</StatCount> succeded</StatRow>
                  <StatRow><StatCount $color={CORAL}>210</StatCount> failed</StatRow>
                </StatList>
                <ChartColumn>
                  <Donut viewBox="0 0 220 220" fill="none">
                    <circle cx="110" cy="110" r="100" stroke={CORAL} strokeWidth="20" />
                    <path d="M114 10A100 100 0 0 1 209.9 106" stroke={GREEN} strokeWidth="24" strokeLinecap="round" />
                  </Donut>
                  <Percentages>
                    <Percent $color={CORAL}>75%</Percent>
                    <Percent $color={GREEN}>25%</Percent>
                  </Percentages>
                </ChartColumn>
              </StatsPanel>
              <WordPanel>
                {words.map(([text, x, base, size, hit]) => (
                  <Word key={text} $x={x} $base={base} $size={size} $hit={hit}>{text}</Word>
                ))}
              </WordPanel>
            </SideColumn>
          </Body>
        </Main>
      </Shell>
      <Scrollbar />
    </Page>
  );
}
